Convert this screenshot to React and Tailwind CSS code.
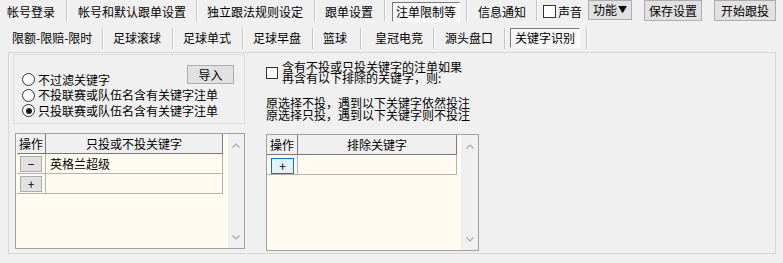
import React from "react";

function Sep({ className = "" }) {
  return <div className={"w-[2px] h-[21px] border-l border-l-[#c4c4c4] border-r border-r-white " + className} />;
}

function Chevron({ down = false }) {
  return (
    <svg width="8" height="5" viewBox="0 0 8 5" className="block">
      <polyline
        points={down ? "0.5,0.5 4,4 7.5,0.5" : "0.5,4.5 4,1 7.5,4.5"}
        fill="none"
        stroke="#a8a8a8"
        strokeWidth="1.2"
      />
    </svg>
  );
}

function Radio({ checked, children }) {
  return (
    <div className="flex items-center h-[15.5px]">
      <div className="w-[13px] h-[13px] rounded-full border border-[#333] bg-white flex items-center justify-center">
        {checked && <div className="w-[6px] h-[6px] rounded-full bg-[#1a1a1a]" />}
      </div>
      <span className="ml-[3px] leading-[14px] whitespace-nowrap">{children}</span>
    </div>
  );
}

function ScrollBar({ w }) {
  return (
    <div className={"bg-[#f0f0f0] flex flex-col justify-between items-center pt-[9px] pb-[8px] " + w}>
      <Chevron />
      <Chevron down />
    </div>
  );
}

export default function App() {
  return (
    <div className="w-[783px] h-[263px] bg-[#f0f0f0] text-[12px] text-black overflow-hidden font-['Noto_Sans_CJK_SC','Noto_Sans',sans-serif]">
      {/* top row */}
      <div className="flex h-[23px] items-center">
        <span className="ml-[7px] w-[48px] whitespace-nowrap leading-[14px]">帐号登录</span>
        <Sep className="ml-[11px] self-start" />
        <span className="ml-[10px] w-[108px] whitespace-nowrap leading-[14px]">帐号和默认跟单设置</span>
        <Sep className="ml-[10px] self-start" />
        <span className="ml-[9px] w-[96px] whitespace-nowrap leading-[14px]">独立跟法规则设定</span>
        <Sep className="ml-[11px] self-start" />
        <span className="ml-[9px] w-[48px] whitespace-nowrap leading-[14px]">跟单设置</span>
        <Sep className="ml-[11px] self-start" />
        <div className="ml-[6px] self-start mt-[2px] w-[68px] h-[20px] flex items-center justify-center border border-t-[#7a7a7a] border-l-[#7a7a7a] border-b-white border-r-white bg-[#f7f7f7] leading-[14px] whitespace-nowrap">
          注单限制等
        </div>
        <Sep className="ml-[6px] self-start" />
        <span className="ml-[10px] w-[48px] whitespace-nowrap leading-[14px]">信息通知</span>
        <Sep className="ml-[10px] self-start" />
        <div className="ml-[5px] w-[13px] h-[13px] border border-[#333] bg-white" />
        <span className="ml-[2px] whitespace-nowrap leading-[14px]">声音</span>
        <div className="ml-[6px] self-start w-[44px] h-[20px] flex items-center justify-center bg-[#e1e1e1] border border-[#adadad] leading-[14px] whitespace-nowrap">
          功能<span className="text-[9px] ml-[1px]">▼</span>
        </div>
        <div className="ml-[12px] self-start w-[58px] h-[21px] flex items-center justify-center bg-[#e1e1e1] border border-[#adadad] leading-[14px] whitespace-nowrap">
          保存设置
        </div>
        <div className="ml-[12px] self-start w-[62px] h-[21px] flex items-center justify-center bg-[#e1e1e1] border border-[#adadad] leading-[14px] whitespace-nowrap">
          开始跟投
        </div>
      </div>

      {/* second row */}
      <div className="flex h-[24px] mt-[3px] items-center">
        <span className="ml-[12px] w-[79px] whitespace-nowrap leading-[14px]">限额-限赔-限时</span>
        <Sep className="ml-[11px]" />
        <span className="ml-[9px] w-[48px] whitespace-nowrap leading-[14px]">足球滚球</span>
        <Sep className="ml-[11px]" />
        <span className="ml-[9px] w-[48px] whitespace-nowrap leading-[14px]">足球单式</span>
        <Sep className="ml-[11px]" />
        <span className="ml-[9px] w-[48px] whitespace-nowrap leading-[14px]">足球早盘</span>
        <Sep className="ml-[11px]" />
        <span className="ml-[9px] w-[24px] whitespace-nowrap leading-[14px]">篮球</span>
        <Sep className="ml-[13px]" />
        <span className="ml-[13px] w-[48px] whitespace-nowrap leading-[14px]">皇冠电竞</span>
        <Sep className="ml-[10px]" />
        <span className="ml-[10px] w-[48px] whitespace-nowrap leading-[14px]">源头盘口</span>
        <Sep className="ml-[11px]" />
        <div className="ml-[4px] w-[70px] h-[20px] flex items-center justify-center border border-t-[#7a7a7a] border-l-[#7a7a7a] border-b-white border-r-white bg-[#f7f7f7] leading-[14px] whitespace-nowrap">
          关键字识别
        </div>
        <Sep className="ml-[6px]" />
      </div>

      {/* panel */}
      <div className="ml-[8px] mt-[2px] w-[768px] h-[202px] border border-[#d6d6d6] flex">
        {/* left column */}
        <div className="w-[237px] flex flex-col">
          <div className="ml-[4px] mt-[1px] w-[232px] h-[70px] border border-[#dcdcdc] grid">
            <div className="col-start-1 row-start-1 pt-[17px] pl-[8px] flex flex-col">
              <Radio>不过滤关键字</Radio>
              <Radio>不投联赛或队伍名含有关键字注单</Radio>
              <Radio checked>只投联赛或队伍名含有关键字注单</Radio>
            </div>
            <div className="col-start-1 row-start-1 justify-self-end self-start mt-[10px] mr-[10px] w-[47px] h-[19px] flex items-center justify-center bg-[#e1e1e1] border border-[#adadad] leading-[14px]">
              导入
            </div>
          </div>

          <div className="ml-[6px] mt-[9px] w-[230px] h-[116px] border border-[#a0a0a0] flex">
            <div className="w-[212px] bg-[#fffbf0] pl-[1px]">
              <div className="grid grid-cols-[29px_177px]">
                <div className="h-[20px] flex items-center justify-center bg-[#f0f0f0] border-b border-r border-[#7a7a7a] leading-[14px]">操作</div>
                <div className="h-[20px] flex items-center justify-center bg-[#f0f0f0] border-b border-r border-[#7a7a7a] leading-[14px]">只投或不投关键字</div>
                <div className="h-[20px] flex items-center pl-[3px] border-b border-r border-[#b4b4b4]">
                  <div className="w-[22px] h-[16px] flex items-center justify-center bg-[#e1e1e1] border border-[#adadad] leading-[12px]">−</div>
                </div>
                <div className="h-[20px] flex items-center pl-[4px] border-b border-r border-[#b4b4b4] leading-[14px] whitespace-nowrap">英格兰超级</div>
                <div className="h-[20px] flex items-center pl-[3px] border-b border-r border-[#b4b4b4]">
                  <div className="w-[22px] h-[16px] flex items-center justify-center bg-[#e1e1e1] border border-[#adadad] leading-[12px]">+</div>
                </div>
                <div className="h-[20px] border-b border-r border-[#b4b4b4]" />
              </div>
            </div>
            <ScrollBar w="w-[16px]" />
          </div>
        </div>

        {/* right column */}
        <div className="ml-[20px] pt-[8px] flex flex-col">
          <div className="flex items-start">
            <div className="mt-[6px] w-[12px] h-[12px] border border-[#333] bg-white" />
            <div className="ml-[4px] leading-[12px] whitespace-nowrap">
              <div>含有不投或只投关键字的注单如果</div>
              <div className="-mt-[1px]">再含有以下排除的关键字，则:</div>
            </div>
          </div>
          <div className="mt-[13px] leading-[12px] whitespace-nowrap">
            <div>原选择不投，遇到以下关键字依然投注</div>
            <div>原选择只投，遇到以下关键字则不投注</div>
          </div>

          <div className="mt-[13px] w-[213px] h-[117px] border border-[#a0a0a0] flex">
            <div className="w-[194px] bg-[#fffbf0]">
              <div className="grid grid-cols-[31px_159px]">
                <div className="h-[20px] flex items-center justify-center bg-[#f0f0f0] border-b border-r border-[#7a7a7a] leading-[14px]">操作</div>
                <div className="h-[20px] flex items-center justify-center bg-[#f0f0f0] border-b border-r border-[#7a7a7a] leading-[14px]">排除关键字</div>
                <div className="h-[20px] flex items-end pl-[4px] border-b border-r border-[#b4b4b4]">
                  <div className="w-[23px] h-[16px] flex items-center justify-center bg-[#e5f1fb] border border-[#0078d7] leading-[12px]">+</div>
                </div>
                <div className="h-[20px] border-b border-r border-[#b4b4b4]" />
              </div>
            </div>
            <ScrollBar w="w-[17px]" />
          </div>
        </div>
      </div>
    </div>
  );
}
